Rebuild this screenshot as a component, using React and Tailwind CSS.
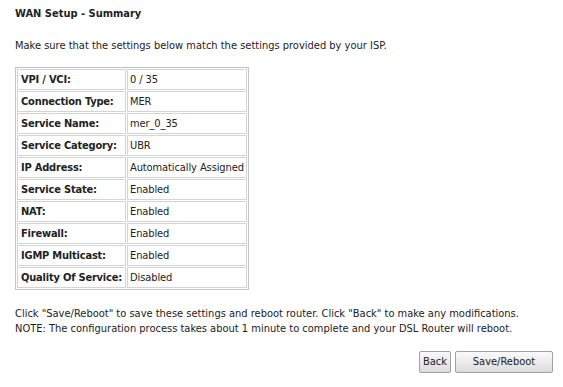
import React from "react";

const rows = [
  ["VPI / VCI:", "0 / 35"],
  ["Connection Type:", "MER"],
  ["Service Name:", "mer_0_35"],
  ["Service Category:", "UBR"],
  ["IP Address:", "Automatically Assigned"],
  ["Service State:", "Enabled"],
  ["NAT:", "Enabled"],
  ["Firewall:", "Enabled"],
  ["IGMP Multicast:", "Enabled"],
  ["Quality Of Service:", "Disabled"],
];

export default function App() {
  return (
    <div
      className="w-[563px] h-[387px] bg-white text-[#222] text-[11px] px-[15px] pt-[6px]"
      style={{ fontFamily: '"DejaVu Sans Condensed", "Liberation Sans", sans-serif' }}
    >
      <div className="font-bold text-[11px] leading-[15px]">WAN Setup - Summary</div>
      <p className="mt-[17px] leading-[15px]">
        Make sure that the settings below match the settings provided by your ISP.
      </p>
      <table className="mt-[14px] border border-[#c4c4c4] border-separate border-spacing-[1px] w-[232px]">
        <tbody>
          {rows.map(([k, v]) => (
            <tr key={k} className="h-[21px]">
              <td className="border border-[#d4d4d4] font-bold tracking-[-0.2px] px-[3px] w-[108px] leading-[17px] whitespace-nowrap">
                {k}
              </td>
              <td className="border border-[#d4d4d4] px-[2px] tracking-[-0.1px] leading-[17px] whitespace-nowrap">{v}</td>
            </tr>
          ))}
        </tbody>
      </table>
      <div className="mt-[16px] leading-[15px]">
        <div className="whitespace-nowrap">Click "Save/Reboot" to save these settings and reboot router. Click "Back" to make any modifications.</div>
        <div className="whitespace-nowrap">NOTE: The configuration process takes about 1 minute to complete and your DSL Router will reboot.</div>
      </div>
      <div className="flex justify-end gap-[4px] mt-[15px] mr-[-5px]">
        <button className="h-[22px] w-[32px] border border-[#a0a0a0] rounded-[2px] bg-gradient-to-b from-[#fafafa] to-[#dcdcdc] text-[11px]">
          Back
        </button>
        <button className="h-[22px] w-[98px] border border-[#a0a0a0] rounded-[2px] bg-gradient-to-b from-[#fafafa] to-[#dcdcdc] text-[11px]">
          Save/Reboot
        </button>
      </div>
    </div>
  );
}
